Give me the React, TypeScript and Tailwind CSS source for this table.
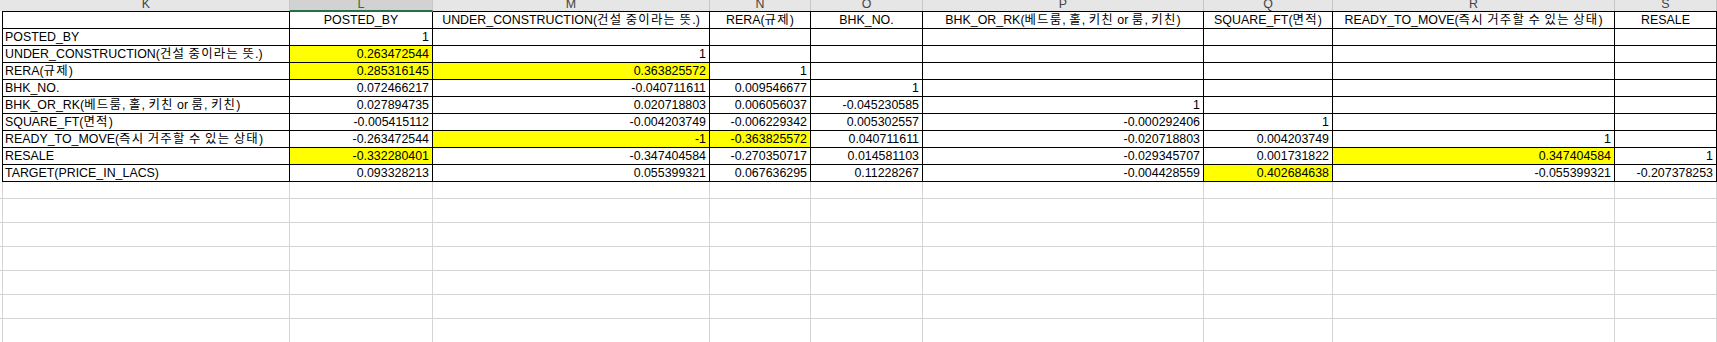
import React from 'react'

type Col = { key: string; w: string; head: string }

const cols: Col[] = [
  { key: 'K', w: 'w-[287px]', head: '' },
  { key: 'L', w: 'w-[143px]', head: 'POSTED_BY' },
  { key: 'M', w: 'w-[277px]', head: 'UNDER_CONSTRUCTION(건설 중이라는 뜻.)' },
  { key: 'N', w: 'w-[101px]', head: 'RERA(규제)' },
  { key: 'O', w: 'w-[112px]', head: 'BHK_NO.' },
  { key: 'P', w: 'w-[281px]', head: 'BHK_OR_RK(베드룸, 홀, 키친 or 룸, 키친)' },
  { key: 'Q', w: 'w-[129px]', head: 'SQUARE_FT(면적)' },
  { key: 'R', w: 'w-[282px]', head: 'READY_TO_MOVE(즉시 거주할 수 있는 상태)' },
  { key: 'S', w: 'w-[102px]', head: 'RESALE' },
]

// vals start at column L, hi = indexes of the yellow cells in vals
const rows: { label: string; vals: string[]; hi: number[] }[] = [
  { label: 'POSTED_BY', vals: ['1'], hi: [] },
  { label: 'UNDER_CONSTRUCTION(건설 중이라는 뜻.)', vals: ['0.263472544', '1'], hi: [0] },
  { label: 'RERA(규제)', vals: ['0.285316145', '0.363825572', '1'], hi: [0, 1] },
  { label: 'BHK_NO.', vals: ['0.072466217', '-0.040711611', '0.009546677', '1'], hi: [] },
  {
    label: 'BHK_OR_RK(베드룸, 홀, 키친 or 룸, 키친)',
    vals: ['0.027894735', '0.020718803', '0.006056037', '-0.045230585', '1'],
    hi: [],
  },
  {
    label: 'SQUARE_FT(면적)',
    vals: ['-0.005415112', '-0.004203749', '-0.006229342', '0.005302557', '-0.000292406', '1'],
    hi: [],
  },
  {
    label: 'READY_TO_MOVE(즉시 거주할 수 있는 상태)',
    vals: ['-0.263472544', '-1', '-0.363825572', '0.040711611', '-0.020718803', '0.004203749', '1'],
    hi: [1, 2],
  },
  {
    label: 'RESALE',
    vals: ['-0.332280401', '-0.347404584', '-0.270350717', '0.014581103', '-0.029345707', '0.001731822', '0.347404584', '1'],
    hi: [0, 6],
  },
  {
    label: 'TARGET(PRICE_IN_LACS)',
    vals: ['0.093328213', '0.055399321', '0.067636295', '0.11228267', '-0.004428559', '0.402684638', '-0.055399321', '-0.207378253'],
    hi: [5],
  },
]

const font = "font-['Liberation_Sans','Noto_Sans_CJK_KR',sans-serif]"

// hangul in the sheet is set a bit wider than the latin text
const Txt = ({ s }: { s: string }) => (
  <span>
    {s.split(/([\uac00-\ud7a3]+)/).map((part, i) =>
      i % 2 === 1 ? (
        <span key={i} className="tracking-[1.2px]">
          {part}
        </span>
      ) : (
        part
      )
    )}
  </span>
)

export default function App() {
  return (
    <div className={`w-[1717px] h-[342px] overflow-hidden bg-white text-[12.4px] text-black ${font}`}>
      {/* column letters */}
      <div className="flex h-[11px] bg-[#e6e6e6]">
        <div className="w-[3px] shrink-0" />
        {cols.map((c) => (
          <div
            key={c.key}
            className={`${c.w} shrink-0 flex justify-center items-start overflow-hidden border-r border-[#c6c6c6] ${
              c.key === 'L' ? 'bg-[#d2d2d2] text-[#217346] border-b border-b-[#217346]' : 'text-[#444]'
            }`}
          >
            <span className="leading-[12px] -mt-[2px]">{c.key}</span>
          </div>
        ))}
      </div>

      {/* top edge of the table */}
      <div className="flex h-px">
        <div className="w-[2px] shrink-0" />
        <div className="w-[288px] shrink-0 bg-black" />
        <div className="w-[143px] shrink-0 bg-[#217346]" />
        <div className="flex-1 bg-black" />
      </div>

      {/* title row */}
      <div className="flex">
        <div className="w-[2px] shrink-0" />
        <div className="flex border-l border-black">
          {cols.map((c) => (
            <div
              key={c.key}
              className={`${c.w} shrink-0 h-[17px] border-r border-b border-black flex items-center justify-center leading-4 whitespace-nowrap overflow-hidden`}
            >
              <Txt s={c.head} />
            </div>
          ))}
        </div>
      </div>

      {/* correlation rows */}
      {rows.map((r) => (
        <div key={r.label} className="flex">
          <div className="w-[2px] shrink-0" />
          <div className="flex border-l border-black">
            {cols.map((c, i) => {
              const isLabel = i === 0
              const v = isLabel ? r.label : r.vals[i - 1] ?? ''
              const yellow = !isLabel && r.hi.includes(i - 1)
              return (
                <div
                  key={c.key}
                  className={`${c.w} shrink-0 h-[17px] border-r border-b border-black flex items-center leading-4 whitespace-nowrap overflow-hidden ${
                    isLabel ? 'justify-start pl-[2px]' : 'justify-end pr-[3px]'
                  } ${yellow ? 'bg-[#ffff00]' : ''}`}
                >
                  <Txt s={v} />
                </div>
              )
            })}
          </div>
        </div>
      ))}

      {/* empty sheet below */}
      {['h-[17px]', 'h-[24px]', 'h-[24px]', 'h-[24px]', 'h-[24px]', 'h-[24px]', 'h-[24px]'].map((h, n) => (
        <div key={n} className="flex">
          <div className={`w-[2px] shrink-0 ${h} border-b border-[#d4d4d4]`} />
          <div className="flex border-l border-[#d4d4d4]">
            {cols.map((c) => (
              <div key={c.key} className={`${c.w} shrink-0 ${h} border-r border-b border-[#d4d4d4]`} />
            ))}
          </div>
        </div>
      ))}
    </div>
  )
}
